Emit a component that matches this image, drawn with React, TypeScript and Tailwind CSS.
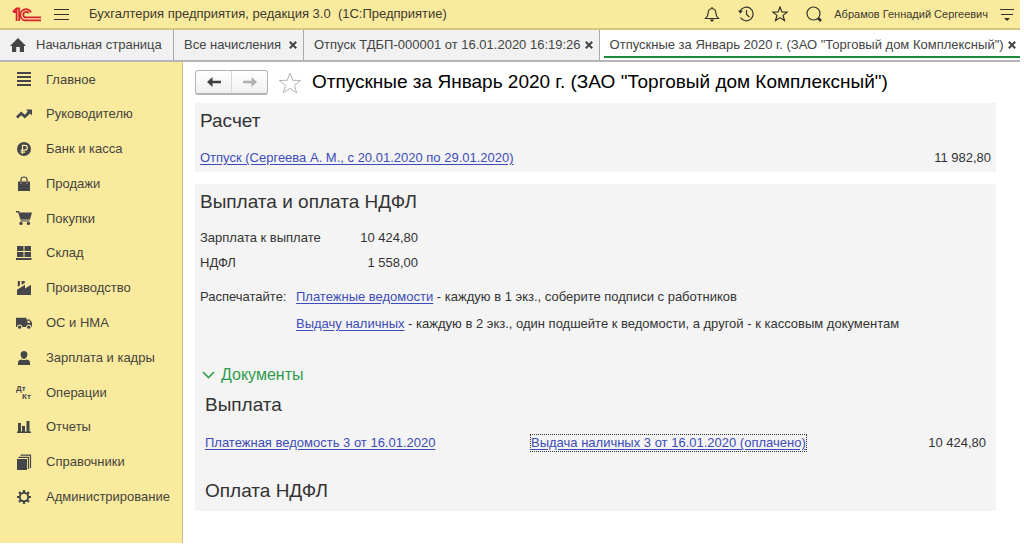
import type { ReactNode } from 'react';

function Logo() {
  return (
    <svg viewBox="0 0 30 15" className="h-[15px] w-[30px]" fill="none" stroke="#d8232a" strokeWidth="1.8">
      <path d="M0.8 5 L4.6 1.4 H7.2 V14 M4.6 1.4 V14 M1.8 5 H4.6" />
      <path d="M19 5.4 A5.6 5.6 0 1 0 14.6 13.4 H29" />
      <path d="M16.6 6.4 A2.8 2.8 0 1 0 14.6 10.4 H29" />
    </svg>
  );
}

const stroke = { fill: 'none', stroke: '#33322a', strokeWidth: 1.2 } as const;

const menu: { label: string; icon: ReactNode }[] = [
  { label: 'Главное', icon: <path d="M1 1h14v2H1zM1 5h14v2H1zM1 9h14v2H1zM1 13h14v2H1z" /> },
  {
    label: 'Руководителю',
    icon: <path d="M0 10.6 5.2 5.4l3.6 3.4 3-3.2L10 3.4h6v6l-1.9-1.9-5.2 5.1-3.6-3.4-3.4 3.4z" />,
  },
  {
    label: 'Банк и касса',
    icon: (
      <>
        <circle cx="8" cy="8" r="7" />
        <path d="M6.5 13V4.3h2.4a2.4 2.4 0 0 1 0 4.8H4.6M4.6 11.1h4.6" fill="none" stroke="#faea9e" strokeWidth="1.2" />
      </>
    ),
  },
  {
    label: 'Продажи',
    icon: (
      <>
        <path d="M2 5.5h2.5v2h1v-2h5v2h1v-2H14V15H2z" />
        <path d="M5 7V3.4Q5 1 8 1t3 2.4V7" fill="none" stroke="currentColor" strokeWidth="1.2" />
      </>
    ),
  },
  {
    label: 'Покупки',
    icon: (
      <>
        <path d="M0 1h3l.7 1.6H16L14 9.6H4.4L2.2 2.6H0z" />
        <path d="M4.5 9.6h9v2.2h-9z" opacity="0.6" />
        <circle cx="5" cy="13.4" r="1.7" />
        <circle cx="12.4" cy="13.4" r="1.7" />
      </>
    ),
  },
  {
    label: 'Склад',
    icon: <path d="M1 1h6.5v5H1zM8.5 1H15v5H8.5zM1 7h6.5v5H1zM8.5 7H15v5H8.5zM0 13h15.5v2H0z" />,
  },
  {
    label: 'Производство',
    icon: <path d="M1 15V9.8L9 4.8v3.6l6-3.6V15zM1.8 1H4v4.2L1.8 6.8zM5.6 1h3.2v2L5.6 4.8z" />,
  },
  {
    label: 'ОС и НМА',
    icon: (
      <>
        <path d="M0 2.8h10.4v1.6h3.4L16 7.5V12H0z" />
        <path d="M11.4 5.7h1.8l1.4 2h-3.2z" fill="#faea9e" />
        <circle cx="3.6" cy="12" r="2.6" fill="#faea9e" />
        <circle cx="12.8" cy="12" r="2.6" fill="#faea9e" />
        <circle cx="3.6" cy="12.2" r="1.6" />
        <circle cx="12.8" cy="12.2" r="1.6" />
      </>
    ),
  },
  {
    label: 'Зарплата и кадры',
    icon: (
      <path d="M8 1a3.4 3.6 0 0 1 3.4 3.6C11.4 6.5 10 9 8 9S4.6 6.5 4.6 4.6A3.4 3.6 0 0 1 8 1zM2 15v-2.5Q2 10 5.5 9.4q2.5 1.4 5 0Q14 10 14 12.5V15z" />
    ),
  },
  {
    label: 'Операции',
    icon: (
      <g fontFamily="Liberation Sans, sans-serif" fontWeight="bold" fontSize="8">
        <text x="0" y="7">Дт</text>
        <text x="6" y="15">Кт</text>
      </g>
    ),
  },
  {
    label: 'Отчеты',
    icon: <path d="M2 4h3v9H2zM6 7h3v6H6zM10.5 2h3v11h-3zM1 12.5h14V14H1z" />,
  },
  {
    label: 'Справочники',
    icon: (
      <>
        <path d="M1 5h10v11H1z" />
        <path d="M2.5 3.4h10V15M4.5 1.2h10V14" fill="none" stroke="currentColor" strokeWidth="1.2" />
      </>
    ),
  },
  {
    label: 'Администрирование',
    icon: (
      <>
        <circle cx="8" cy="8" r="4.2" fill="none" stroke="currentColor" strokeWidth="2" />
        <path
          d="M8 1v2.5M8 12.5V15M1 8h2.5M12.5 8H15M3 3l1.8 1.8M11.2 11.2 13 13M3 13l1.8-1.8M11.2 4.8 13 3"
          stroke="currentColor"
          strokeWidth="2.2"
        />
      </>
    ),
  },
];

function CloseButton() {
  return (
    <button aria-label="Закрыть" className="p-0.5">
      <svg viewBox="0 0 8 8" className="h-2 w-2" stroke="#444" strokeWidth="2">
        <path d="M0.8 0.8 7.2 7.2M7.2 0.8 0.8 7.2" />
      </svg>
    </button>
  );
}

function Tab({ title }: { title: string }) {
  return (
    <div className="flex min-w-[130px] shrink-0 items-center justify-between gap-0.5 whitespace-nowrap border-r border-[#a9a9a9] pl-2.5 pr-1">
      <button>{title}</button>
      <CloseButton />
    </div>
  );
}

function Link({ children, focused = false }: { children: ReactNode; focused?: boolean }) {
  return (
    <a
      href="#"
      className={
        focused
          ? 'text-[#3c4cb8] underline underline-offset-2 outline-1 outline-dotted outline-[#333]'
          : 'text-[#3c4cb8] underline underline-offset-2'
      }
    >
      {children}
    </a>
  );
}

function TopBar() {
  return (
    <header className="flex h-[30px] items-center border-b-2 border-[#d3c684] bg-[#faea9e] pl-3 pr-1.5 text-[#3d3b30]">
      <Logo />
      <button aria-label="Меню" className="ml-3">
        <svg viewBox="0 0 15 12" className="h-3 w-[15px]" fill="none" stroke="#33322a">
          <path d="M0 1.5h15M0 6.5h15M0 11.5h15" />
        </svg>
      </button>
      <h1 className="ml-5 whitespace-pre text-[13px]">Бухгалтерия предприятия, редакция 3.0  (1С:Предприятие)</h1>
      <div className="ml-auto flex items-center gap-[18px]">
        <button aria-label="Уведомления">
          <svg viewBox="0 0 16 16" className="h-4 w-4" {...stroke}>
            <path d="M1.5 12.5Q4 10.5 4.2 6.5 4.5 2.8 8 2.5q3.5.3 3.8 4Q12 10.5 14.5 12.5zM8 2.5V1" />
            <path d="M5.5 13.5h5L8 16z" fill="#33322a" stroke="none" />
          </svg>
        </button>
        <button aria-label="История">
          <svg viewBox="0 0 16 16" className="h-4 w-4" {...stroke}>
            <path d="M2 5.5A6.8 6.8 0 1 1 2.5 11.5M8.5 4v4.5l3 2.5" />
            <path d="M0 4.5h5L2.3 7.8z" fill="#33322a" stroke="none" />
          </svg>
        </button>
        <button aria-label="Избранное">
          <svg viewBox="0 0 16 16" className="h-4 w-4" {...stroke}>
            <path d="M8 1l1.9 4.9 5.3.2-4.2 3.3 1.5 5.2L8 11.6l-4.5 3L5 9.4.8 6.1l5.3-.2z" />
          </svg>
        </button>
        <button aria-label="Поиск">
          <svg viewBox="0 0 16 16" className="h-4 w-4" {...stroke}>
            <circle cx="7.5" cy="7.5" r="6.5" />
            <path d="M12 12l3 3" strokeWidth="2.6" />
          </svg>
        </button>
      </div>
      <span className="ml-3 whitespace-nowrap text-[11px]">Абрамов Геннадий Сергеевич</span>
      <button aria-label="Сервис" className="ml-3">
        <svg viewBox="0 0 14 14" className="h-3.5 w-3.5" {...stroke}>
          <path d="M0 2.5h14M1 7.5h12" />
          <path d="M4 11h6L7 14z" fill="#33322a" stroke="none" />
        </svg>
      </button>
    </header>
  );
}

function Tabs() {
  return (
    <nav className="flex h-8 border-b-2 border-[#b5b5b8] bg-[#f1f1f1] text-[13px] text-[#444]">
      <button className="flex w-[174px] shrink-0 items-center gap-2.5 whitespace-nowrap border-r border-[#a9a9a9] pl-2.5">
        <svg viewBox="0 0 16 14" className="h-3.5 w-4" fill="#444">
          <path d="M8 0 16 8h-2v6H9.8V9H6.2v5H2V8H0z" />
        </svg>
        Начальная страница
      </button>
      <Tab title="Все начисления" />
      <Tab title="Отпуск ТДБП-000001 от 16.01.2020 16:19:26" />
      <div className="flex flex-1 bg-white pb-0.5 pl-1">
        <div className="flex flex-1 items-center justify-between whitespace-nowrap border-b-2 border-[#1f8a3b] pl-1.5 pr-0.5 pt-1">
          <button>Отпускные за Январь 2020 г. (ЗАО "Торговый дом Комплексный")</button>
          <CloseButton />
        </div>
      </div>
    </nav>
  );
}

function Sidebar() {
  return (
    <nav className="w-[183px] shrink-0 border-r border-[#cbbf80] bg-[#faea9e]">
      <div className="grid h-[452px] auto-rows-fr">
        {menu.map((item) => (
          <a key={item.label} href="#" className="flex items-center gap-3.5 pl-4 text-[13px] text-[#45443c]">
            <svg viewBox="0 0 16 16" className="h-4 w-4 shrink-0 text-[#45464a]" fill="currentColor">
              {item.icon}
            </svg>
            {item.label}
          </a>
        ))}
      </div>
    </nav>
  );
}

function TitleRow() {
  return (
    <div className="flex h-[41px] items-center">
      <div className="flex h-[25px] w-[73px] rounded-[3px] border border-b-2 border-[#b4b4b4] bg-linear-to-b from-white to-[#f0f0f0]">
        <button aria-label="Назад" className="flex flex-1 items-center justify-center border-r border-[#d8d8d8]">
          <svg viewBox="0 0 14 10" className="h-2.5 w-3.5" fill="#404040">
            <path d="M0 5 5.5 0v3.8H14v2.4H5.5V10z" />
          </svg>
        </button>
        <button aria-label="Вперед" className="flex flex-1 items-center justify-center">
          <svg viewBox="0 0 14 10" className="h-2.5 w-3.5" fill="#b0b0b0">
            <path d="M14 5 8.5 0v3.8H0v2.4h8.5V10z" />
          </svg>
        </button>
      </div>
      <button aria-label="В избранное" className="ml-2.5">
        <svg viewBox="0 0 24 22" className="h-[22px] w-6" fill="#fff" stroke="#b2b2ba" strokeWidth="1">
          <path d="M12 1l2.7 7.3 8 .2-6.3 4.8 2.3 7.5L12 16.4l-6.7 4.4 2.3-7.5L1.3 8.5l8-.2z" />
        </svg>
      </button>
      <h2 className="ml-2.5 whitespace-nowrap text-[19px] text-black">
        Отпускные за Январь 2020 г. (ЗАО "Торговый дом Комплексный")
      </h2>
    </div>
  );
}

export default function App() {
  return (
    <div className="flex min-h-screen flex-col bg-white pb-0.5 pr-1 font-['Liberation_Sans',Arial,sans-serif] text-[#333]">
      <TopBar />
      <Tabs />
      <div className="flex flex-1">
        <Sidebar />
        <main className="flex-1 pl-3 pr-6 text-[13px]">
          <TitleRow />
          <section className="bg-[#f4f4f4] px-[5px] pb-1.5 pt-1">
            <h3 className="text-[19px] leading-7">Расчет</h3>
            <div className="mt-[15px] flex justify-between leading-4">
              <Link>Отпуск (Сергеева А. М., с 20.01.2020 по 29.01.2020)</Link>
              <span>11 982,80</span>
            </div>
          </section>

          <section className="mt-3 bg-[#f4f4f4] px-[5px] pb-1.5 pt-1">
            <h3 className="text-[19px] leading-7">Выплата и оплата НДФЛ</h3>
            <table className="mt-[9px] w-[218px] leading-[25px]">
              <tbody>
                <tr>
                  <th scope="row" className="p-0 text-left font-normal">Зарплата к выплате</th>
                  <td className="p-0 text-right">10 424,80</td>
                </tr>
                <tr>
                  <th scope="row" className="p-0 text-left font-normal">НДФЛ</th>
                  <td className="p-0 text-right">1 558,00</td>
                </tr>
              </tbody>
            </table>
            <div className="mt-2 flex leading-[27px]">
              <span className="w-24 shrink-0">Распечатайте:</span>
              <div>
                <p>
                  <Link>Платежные ведомости</Link> - каждую в 1 экз., соберите подписи с работников
                </p>
                <p>
                  <Link>Выдачу наличных</Link> - каждую в 2 экз., один подшейте к ведомости, а другой - к кассовым документам
                </p>
              </div>
            </div>
            <button className="mt-6 flex items-center gap-1.5 pl-0.5 text-[16px] leading-7 text-[#2f9b4c]">
              <svg viewBox="0 0 13 8" className="h-2 w-[13px]" fill="none" stroke="currentColor" strokeWidth="1.6">
                <path d="M1 1l5.5 5.5L12 1" />
              </svg>
              Документы
            </button>
            <div className="px-[5px]">
              <h4 className="mt-0.5 text-[19px] leading-7">Выплата</h4>
              <div className="mt-4 flex leading-4">
                <span className="w-[326px]">
                  <Link>Платежная ведомость 3 от 16.01.2020</Link>
                </span>
                <Link focused>Выдача наличных 3 от 16.01.2020 (оплачено)</Link>
                <span className="ml-auto">10 424,80</span>
              </div>
              <h4 className="mt-[26px] text-[19px] leading-7">Оплата НДФЛ</h4>
            </div>
          </section>
        </main>
      </div>
    </div>
  );
}
